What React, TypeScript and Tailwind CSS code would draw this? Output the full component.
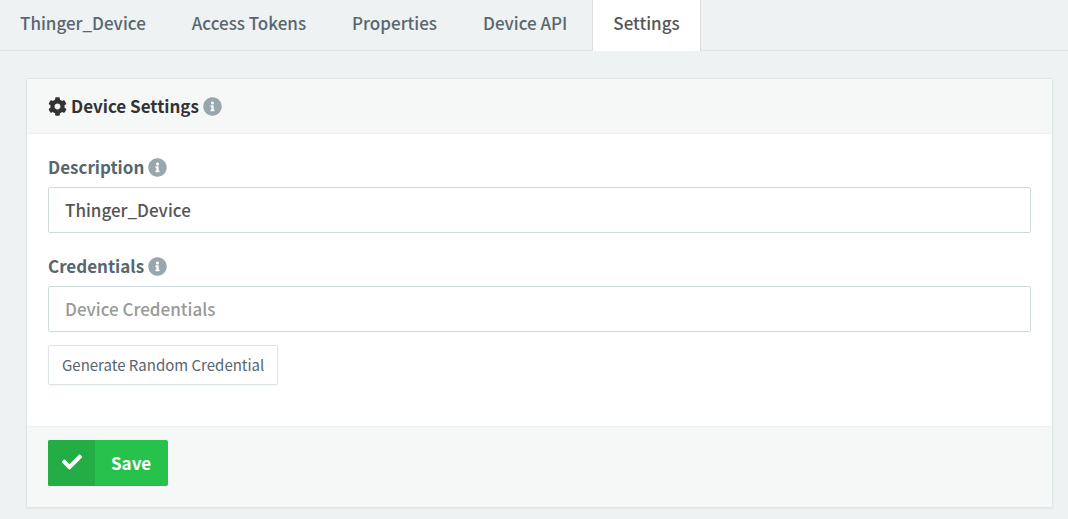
import { useState } from 'react';
import type { ReactNode } from 'react';
import { FaCheck, FaCog, FaInfoCircle } from 'react-icons/fa';

const tabs = ['Thinger_Device', 'Access Tokens', 'Properties', 'Device API', 'Settings'];

function InfoIcon() {
  return <FaInfoCircle aria-hidden="true" className="size-[19px] shrink-0 text-[#98a6ad]" />;
}

function Field({ id, label, children }: { id: string; label: string; children: ReactNode }) {
  return (
    <div>
      <div className="mb-2 flex items-center gap-1">
        <label htmlFor={id} className="font-bold">
          {label}
        </label>
        <InfoIcon />
      </div>
      {children}
    </div>
  );
}

const inputClass =
  'block h-[46px] w-full rounded-xs border border-[#cfdadd] bg-white px-4 pb-0.5 font-medium text-[#555] outline-none placeholder:text-[#999] focus:border-[#23b7e5]';

export default function App() {
  const [active, setActive] = useState('Settings');
  const [description, setDescription] = useState('Thinger_Device');
  const [credentials, setCredentials] = useState('');

  return (
    <div className="min-h-screen bg-[#eef2f3] font-['Noto_Sans_CJK_SC','Source_Sans_Pro',sans-serif] text-[17px] leading-6 text-[#58666e]">
      <nav className="-ml-px flex gap-1 border-b border-[#dee5e7]">
        {tabs.map((tab) => (
          <button
            key={tab}
            type="button"
            onClick={() => setActive(tab)}
            className={
              tab === active
                ? '-mb-px h-[51px] border-x border-[#ddd] bg-white px-5 pb-1.5 font-medium text-[#555]'
                : 'h-[50px] border-x border-transparent px-5 pb-1 font-medium'
            }
          >
            {tab}
          </button>
        ))}
      </nav>

      <main className="pt-[27px] pr-[15px] pb-[11px] pl-[26px]">
        <form
          onSubmit={(event) => event.preventDefault()}
          className="overflow-hidden rounded-xs border border-[#dee5e7] bg-white shadow-xs"
        >
          <header className="flex h-[55px] items-center gap-1 border-b border-[#edf1f2] bg-[#f6f8f8] px-[21px] text-[#333]">
            <FaCog aria-hidden="true" className="size-[19px] shrink-0" />
            <h1 className="font-bold">Device Settings</h1>
            <InfoIcon />
          </header>

          <div className="flex flex-col gap-[21px] px-[21px] pt-[21px] pb-[41px]">
            <Field id="description" label="Description">
              <input
                id="description"
                type="text"
                value={description}
                onChange={(event) => setDescription(event.target.value)}
                className={inputClass}
              />
            </Field>
            <Field id="credentials" label="Credentials">
              <input
                id="credentials"
                type="text"
                placeholder="Device Credentials"
                value={credentials}
                onChange={(event) => setCredentials(event.target.value)}
                className={inputClass}
              />
              <button
                type="button"
                className="mt-[13px] block h-10 rounded-xs border border-[#dee5e7] bg-white px-[13px] text-[15px] font-normal shadow-xs"
              >
                Generate Random Credential
              </button>
            </Field>
          </div>

          <footer className="border-t border-[#edf1f2] bg-[#f6f8f8] px-[21px] pt-[13px] pb-[21px]">
            <button
              type="submit"
              className="flex h-[46px] items-stretch overflow-hidden rounded-xs bg-[#27c24c] font-bold text-white"
            >
              <span className="flex w-[47px] items-center justify-center bg-[#23ad44] pb-0.5">
                <FaCheck aria-hidden="true" className="size-5" />
              </span>
              <span className="flex items-center pr-[17px] pl-4">Save</span>
            </button>
          </footer>
        </form>
      </main>
    </div>
  );
}
